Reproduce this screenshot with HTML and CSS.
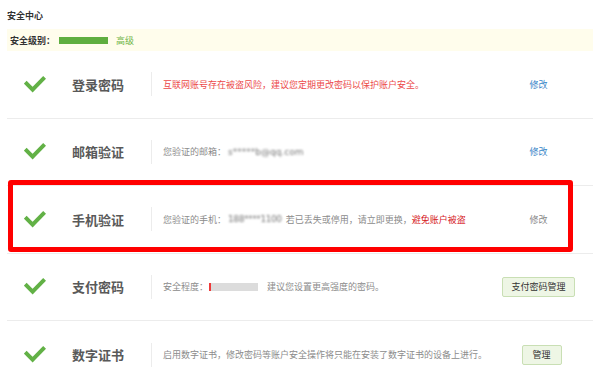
FILE: index.html
```html
<!DOCTYPE html>
<html lang="zh-CN">
<head>
<meta charset="utf-8">
<title>安全中心</title>
<link rel="stylesheet" href="styles.css">
</head>
<body>
<div class="page">
  <div class="head">安全中心</div>
  <div class="level">
    <span class="level-label">安全级别：</span>
    <span class="level-bar"></span>
    <span class="level-text">高级</span>
  </div>
  <div class="rows">
    <div class="row">
      <svg class="check" viewBox="0 0 22 17" width="22" height="17"><path d="M1.2 6.2 L8.6 13.6 L20.6 1.4" fill="none" stroke="#62b146" stroke-width="4"/></svg>
      <div class="title">登录密码</div>
      <div class="sep"></div>
      <div class="desc warn">互联网账号存在被盗风险，建议您定期更改密码以保护账户安全。</div>
      <div class="action"><a class="link">修改</a></div>
    </div>
    <div class="row">
      <svg class="check" viewBox="0 0 22 17" width="22" height="17"><path d="M1.2 6.2 L8.6 13.6 L20.6 1.4" fill="none" stroke="#62b146" stroke-width="4"/></svg>
      <div class="title">邮箱验证</div>
      <div class="sep"></div>
      <div class="desc">您验证的邮箱：<span class="blur">s*****b@qq.com</span></div>
      <div class="action"><a class="link">修改</a></div>
    </div>
    <div class="row">
      <svg class="check" viewBox="0 0 22 17" width="22" height="17"><path d="M1.2 6.2 L8.6 13.6 L20.6 1.4" fill="none" stroke="#62b146" stroke-width="4"/></svg>
      <div class="title">手机验证</div>
      <div class="sep"></div>
      <div class="desc">您验证的手机：<span class="blur phone">188****1100</span>若已丢失或停用，请立即更换，<span class="alert">避免账户被盗</span></div>
      <div class="action"><a class="link muted">修改</a></div>
    </div>
    <div class="row">
      <svg class="check" viewBox="0 0 22 17" width="22" height="17"><path d="M1.2 6.2 L8.6 13.6 L20.6 1.4" fill="none" stroke="#62b146" stroke-width="4"/></svg>
      <div class="title">支付密码</div>
      <div class="sep"></div>
      <div class="desc">安全程度：<span class="strength"><span class="strength-fill"></span></span>建议您设置更高强度的密码。</div>
      <div class="action"><span class="btn btn-wide">支付密码管理</span></div>
    </div>
    <div class="row">
      <svg class="check" viewBox="0 0 22 17" width="22" height="17"><path d="M1.2 6.2 L8.6 13.6 L20.6 1.4" fill="none" stroke="#62b146" stroke-width="4"/></svg>
      <div class="title">数字证书</div>
      <div class="sep"></div>
      <div class="desc">启用数字证书，修改密码等账户安全操作将只能在安装了数字证书的设备上进行。</div>
      <div class="action"><span class="btn">管理</span></div>
    </div>
  </div>
  <div class="highlight"></div>
</div>
</body>
</html>
```

FILE: styles.css
```css
html, body {
  margin: 0;
  padding: 0;
  background: #ffffff;
}
body {
  font-family: "Noto Sans CJK SC", "Microsoft YaHei", sans-serif;
  color: #333;
  overflow: hidden;
}
.page {
  position: relative;
  padding: 0 7px;
  height: 377px;
}
.head {
  padding-top: 10px;
  font-size: 9px;
  line-height: 12px;
  font-weight: bold;
  color: #333;
}
.level {
  margin-top: 7px;
  height: 22px;
  background: #fffdec;
  display: flex;
  align-items: center;
  padding-left: 3px;
  font-size: 9px;
}
.level-label {
  font-weight: bold;
  color: #333;
}
.level-bar {
  width: 49px;
  height: 7px;
  background: #5fae3f;
  margin-left: 4px;
}
.level-text {
  margin-left: 8px;
  color: #6fb547;
}
.rows {
  display: flex;
  flex-direction: column;
}
.row {
  box-sizing: border-box;
  height: 67.5px;
  border-bottom: 1px solid #ececec;
  display: flex;
  align-items: center;
  padding-left: 17px;
}
.row:last-child {
  border-bottom: none;
}
.check {
  flex: none;
  display: block;
}
.title {
  margin-left: 26px;
  width: 79px;
  font-size: 13px;
  font-weight: bold;
  color: #595959;
  flex: none;
}
.sep {
  width: 1px;
  height: 24px;
  background: #ececec;
  flex: none;
}
.desc {
  margin-left: 11px;
  flex: 1;
  font-size: 9px;
  color: #8c8c8c;
  display: flex;
  align-items: center;
  white-space: nowrap;
}
.desc.warn {
  color: #ec4a4a;
}
.blur {
  filter: blur(1.2px);
  color: #777;
  margin-left: 2px;
  margin-right: 4px;
  font-family: "DejaVu Sans", sans-serif;
  font-size: 9px;
}
.phone {
  letter-spacing: -0.4px;
}
.alert {
  color: #d61a1f;
}
.strength {
  width: 49px;
  height: 8px;
  background: #dcdcdc;
  margin-left: 1px;
  margin-right: 9px;
  display: flex;
}
.strength-fill {
  width: 2px;
  height: 8px;
  background: #ee3a3a;
}
.action {
  width: 109px;
  flex: none;
  display: flex;
  justify-content: center;
  font-size: 9px;
}
.link {
  color: #3a86c8;
}
.link.muted {
  color: #888;
}
.btn {
  display: inline-block;
  box-sizing: border-box;
  height: 20px;
  line-height: 18px;
  padding: 0 10px;
  background: #eef6e5;
  border: 1px solid #c9dfb4;
  border-radius: 2px;
  color: #333;
  font-size: 9px;
}
.btn-wide {
  padding: 0 8px;
}
.highlight {
  position: absolute;
  left: 8px;
  top: 180px;
  width: 565px;
  height: 72px;
  box-sizing: border-box;
  border: 5px solid #ff0000;
  border-radius: 3px;
}
```
